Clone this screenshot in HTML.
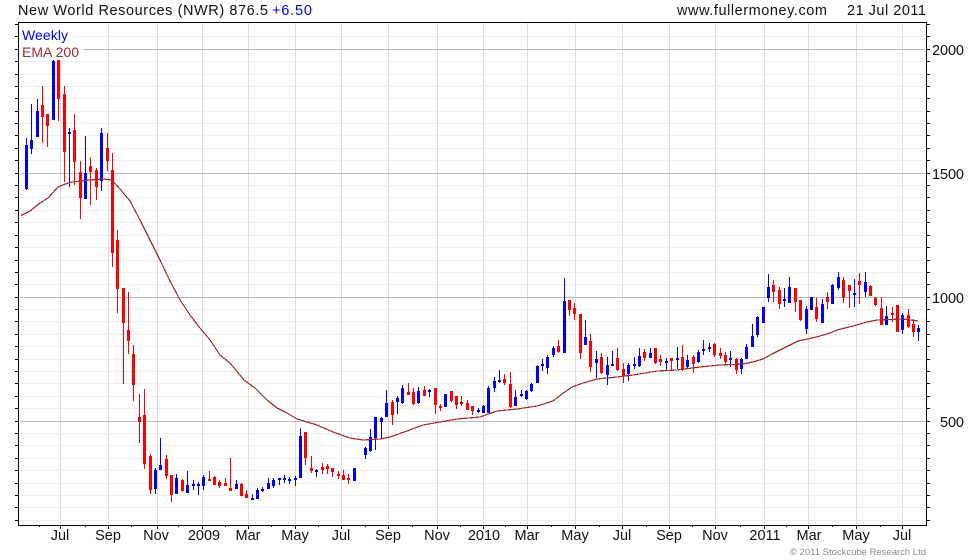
<!DOCTYPE html>
<html><head><meta charset="utf-8"><title>New World Resources (NWR)</title>
<style>
html,body{margin:0;padding:0;background:#fff;width:980px;height:560px;overflow:hidden}
svg{display:block}
text{font-family:"Liberation Sans",Arial,sans-serif;font-size:14.5px;fill:#111}
</style></head><body>
<svg width="980" height="560" viewBox="0 0 980 560" xmlns="http://www.w3.org/2000/svg">
<g shape-rendering="crispEdges" fill="none">
<path stroke="#eee" d="M18 36.5H927M18 61.5H927M18 74.5H927M18 86.5H927M18 98.5H927M18 111.5H927M18 123.5H927M18 135.5H927M18 148.5H927M18 160.5H927M18 185.5H927M18 197.5H927M18 210.5H927M18 222.5H927M18 235.5H927M18 247.5H927M18 260.5H927M18 272.5H927M18 284.5H927M18 309.5H927M18 321.5H927M18 334.5H927M18 346.5H927M18 359.5H927M18 371.5H927M18 383.5H927M18 396.5H927M18 408.5H927M18 433.5H927M18 445.5H927M18 458.5H927M18 470.5H927M18 483.5H927M18 495.5H927M18 507.5H927M18 520.5H927"/>
<path stroke="#ddd" d="M60.5 23V525M108.5 23V525M157.5 23V525M202.5 23V525M248.5 23V525M295.5 23V525M341.5 23V525M388.5 23V525M437.5 23V525M483.5 23V525M527.5 23V525M575.5 23V525M622.5 23V525M669.5 23V525M715.5 23V525M764.5 23V525M808.5 23V525M856.5 23V525M902.5 23V525"/>
<path stroke="#bbb" d="M18 49.5H927M18 173.5H927M18 297.5H927M18 421.5H927"/>
<rect x="19" y="24" width="49" height="19" fill="#fff"/>
<rect x="19" y="43" width="63" height="18" fill="#fff"/>
<path stroke="#00f" d="M26.5 138V190M31.5 104V154M37.5 99V137M53.5 60V120M69.5 128V187M85.5 136V199M101.5 128V191M155.5 468V494M160.5 438V470M176.5 474V494M187.5 471V493M193.5 480V490M198.5 482V495M203.5 475V490M236.5 480V489M252.5 494V500M257.5 488V499M262.5 487V492M268.5 478V489M273.5 478V488M279.5 478V485M284.5 475V483M289.5 477V484M295.5 476V486M300.5 428V478M316.5 469V477M354.5 468V481M365.5 447V459M370.5 429V452M375.5 417V450M381.5 417V439M386.5 390V417M397.5 396V414M402.5 385V404M418.5 387V404M429.5 389V397M445.5 394V407M478.5 408V413M483.5 405V413M488.5 386V413M494.5 377V392M499.5 370V383M515.5 390V406M521.5 390V397M526.5 390V400M531.5 383V392M537.5 365V383M542.5 359V371M547.5 355V374M553.5 346V357M564.5 278V353M585.5 320V345M596.5 351V378M607.5 357V385M612.5 351V366M628.5 363V381M634.5 357V369M639.5 348V367M650.5 348V358M666.5 358V370M677.5 347V369M687.5 355V368M698.5 350V363M703.5 340V355M709.5 343V352M730.5 351V367M741.5 358V374M746.5 344V359M752.5 324V347M757.5 316V337M763.5 307V323M768.5 274V302M784.5 288V307M789.5 277V303M806.5 306V334M811.5 297V310M822.5 299V323M832.5 284V304M838.5 272V290M854.5 279V307M865.5 272V297M886.5 306V325M902.5 313V334M918.5 325V341"/>
<path stroke="#00f" stroke-width="3" d="M26.5 145V189M31.5 140V149M37.5 111V137M53.5 61V120M69.5 132V134M85.5 173V199M101.5 133V181M155.5 470V489M160.5 465V470M176.5 478V494M187.5 485V493M193.5 484V486M198.5 484V486M203.5 477V486M236.5 484V489M252.5 498V500M257.5 490V499M262.5 489V491M268.5 483V489M273.5 480V486M279.5 478V480M284.5 478V480M289.5 479V481M295.5 478V480M300.5 436V478M316.5 470V472M354.5 468V481M365.5 448V455M370.5 437V451M375.5 417V438M381.5 418V422M386.5 403V417M397.5 398V402M402.5 388V403M418.5 391V403M429.5 390V392M445.5 394V407M478.5 410V412M483.5 406V413M488.5 388V413M494.5 381V388M499.5 380V382M515.5 397V406M521.5 394V396M526.5 391V399M531.5 384V391M537.5 366V383M542.5 364V366M547.5 357V368M553.5 348V355M564.5 301V353M585.5 337V345M596.5 359V363M607.5 365V375M612.5 364V366M628.5 365V374M634.5 364V366M639.5 356V366M650.5 353V358M666.5 361V363M677.5 358V360M687.5 360V367M698.5 352V362M703.5 349V351M709.5 347V349M730.5 358V360M741.5 359V369M746.5 347V359M752.5 336V347M757.5 317V335M763.5 307V323M768.5 287V298M784.5 299V301M789.5 287V303M806.5 309V329M811.5 297V310M822.5 304V323M832.5 285V304M838.5 277V288M854.5 293V295M865.5 282V292M886.5 316V325M902.5 315V330M918.5 328V332"/>
<path stroke="#f00" d="M42.5 86V143M47.5 114V147M58.5 60V121M64.5 86V182M74.5 114V185M80.5 161V219M90.5 157V205M96.5 168V200M107.5 133V171M112.5 153V267M117.5 230V313M123.5 288V384M128.5 292V354M133.5 345V401M139.5 394V443M144.5 389V469M150.5 454V494M166.5 455V479M171.5 475V502M182.5 479V492M209.5 471V481M214.5 476V485M219.5 480V488M225.5 478V486M230.5 458V491M241.5 483V496M246.5 490V498M305.5 432V465M311.5 456V473M322.5 463V474M327.5 464V474M332.5 468V477M338.5 471V479M343.5 470V480M348.5 474V484M392.5 400V425M408.5 383V395M413.5 388V405M424.5 386V396M435.5 388V414M440.5 404V411M451.5 391V402M456.5 396V409M461.5 396V406M467.5 400V410M472.5 406V415M504.5 374V385M510.5 372V408M558.5 340V353M569.5 300V316M574.5 303V320M580.5 314V359M590.5 334V372M601.5 353V374M617.5 348V371M623.5 363V383M644.5 349V361M655.5 348V364M660.5 355V366M671.5 358V371M682.5 345V371M693.5 355V373M714.5 343V357M720.5 348V359M725.5 352V364M736.5 358V374M773.5 280V302M779.5 287V309M795.5 288V312M800.5 300V321M816.5 298V322M827.5 292V309M843.5 277V303M849.5 285V308M859.5 273V304M870.5 285V296M875.5 297V306M881.5 297V325M892.5 307V322M897.5 305V332M908.5 309V328M913.5 319V337"/>
<path stroke="#f00" stroke-width="3" d="M42.5 105V117M47.5 114V126M58.5 60V99M64.5 94V152M74.5 130V162M80.5 172V198M90.5 166V172M96.5 170V187M107.5 148V161M112.5 170V253M117.5 240V289M123.5 288V323M128.5 330V341M133.5 354V385M139.5 417V422M144.5 415V464M150.5 456V490M166.5 459V476M171.5 475V495M182.5 480V491M209.5 479V481M214.5 477V485M219.5 482V486M225.5 483V486M230.5 488V491M241.5 484V496M246.5 494V498M305.5 432V458M311.5 468V471M322.5 467V470M327.5 466V469M332.5 468V472M338.5 474V476M343.5 475V480M348.5 478V480M392.5 402V415M408.5 392V395M413.5 392V404M424.5 390V396M435.5 388V405M440.5 406V408M451.5 391V401M456.5 396V405M461.5 402V404M467.5 403V410M472.5 406V411M504.5 379V383M510.5 384V407M558.5 346V352M569.5 300V310M574.5 308V314M580.5 314V353M590.5 341V367M601.5 357V373M617.5 358V370M623.5 369V376M644.5 352V358M655.5 348V363M660.5 359V362M671.5 358V361M682.5 357V370M693.5 357V364M714.5 344V355M720.5 353V356M725.5 355V362M736.5 359V370M773.5 285V292M779.5 290V304M795.5 288V302M800.5 300V320M816.5 307V319M827.5 297V302M843.5 280V298M849.5 285V291M859.5 281V285M870.5 286V296M875.5 298V305M881.5 308V325M892.5 313V315M897.5 305V332M908.5 315V327M913.5 324V332"/>
</g>
<polyline fill="none" stroke="#a52a2a" stroke-width="1.2" shape-rendering="crispEdges" points="21,215.5 30,211 40,203 48,198 58,187 65,184 72,182 90,180 103,179 112,180 120,189 130,201 140,220 150,240 160,260 170,281 180,300 190,315 200,328 210,340 220,355 230,363 244,380 255,388 267,400 277,408 287,413 297,419 307,422 317,425 333,432 350,438 363,440 380,439 390,437 407,431 423,425 440,422 457,419 480,417 497,411 517,409 537,406 553,401 562,394 572,387 583,383 597,379 617,377 633,375 657,371 677,370 700,367 720,365 743,364 753,362 763,359 772,354 788,346 798,341 808,339 820,336 830,333 837,330 853,326 867,322 877,320 903,319 918,321"/>
<g shape-rendering="crispEdges" fill="none" stroke="#000">
<path d="M18.5 22.5H926.5V525.5H18.5Z"/>
<path d="M15 24.5H18M15 36.5H18M15 49.5H18M15 61.5H18M15 74.5H18M15 86.5H18M15 98.5H18M15 111.5H18M15 123.5H18M15 135.5H18M15 148.5H18M15 160.5H18M15 173.5H18M15 185.5H18M15 197.5H18M15 210.5H18M15 222.5H18M15 235.5H18M15 247.5H18M15 260.5H18M15 272.5H18M15 284.5H18M15 297.5H18M15 309.5H18M15 321.5H18M15 334.5H18M15 346.5H18M15 359.5H18M15 371.5H18M15 383.5H18M15 396.5H18M15 408.5H18M15 421.5H18M15 433.5H18M15 445.5H18M15 458.5H18M15 470.5H18M15 483.5H18M15 495.5H18M15 507.5H18M15 520.5H18"/>
<path d="M927 24.5H930M927 36.5H930M927 49.5H930M927 61.5H930M927 74.5H930M927 86.5H930M927 98.5H930M927 111.5H930M927 123.5H930M927 135.5H930M927 148.5H930M927 160.5H930M927 173.5H930M927 185.5H930M927 197.5H930M927 210.5H930M927 222.5H930M927 235.5H930M927 247.5H930M927 260.5H930M927 272.5H930M927 284.5H930M927 297.5H930M927 309.5H930M927 321.5H930M927 334.5H930M927 346.5H930M927 359.5H930M927 371.5H930M927 383.5H930M927 396.5H930M927 408.5H930M927 421.5H930M927 433.5H930M927 445.5H930M927 458.5H930M927 470.5H930M927 483.5H930M927 495.5H930M927 507.5H930M927 520.5H930"/>
<path d="M60.5 526V529M108.5 526V529M157.5 526V529M202.5 526V529M248.5 526V529M295.5 526V529M341.5 526V529M388.5 526V529M437.5 526V529M483.5 526V529M527.5 526V529M575.5 526V529M622.5 526V529M669.5 526V529M715.5 526V529M764.5 526V529M808.5 526V529M856.5 526V529M902.5 526V529"/>
<path d="M39.5 526V527M85.5 526V527M131.5 526V527M178.5 526V527M225.5 526V527M271.5 526V527M318.5 526V527M365.5 526V527M412.5 526V527M460.5 526V527M505.5 526V527M551.5 526V527M599.5 526V527M646.5 526V527M692.5 526V527M740.5 526V527M786.5 526V527M832.5 526V527M880.5 526V527"/>
</g>
<text x="18" y="15" textLength="250">New World Resources (NWR) 876.5</text>
<text x="272" y="15" textLength="40" style="fill:#00f">+6.50</text>
<text x="677" y="15" textLength="150">www.fullermoney.com</text>
<text x="847" y="15" textLength="79">21 Jul 2011</text>
<text x="22" y="40" textLength="46" style="font-size:14px;fill:#00f">Weekly</text>
<text x="22" y="57" textLength="57" style="font-size:14px;fill:#a52a2a">EMA 200</text>
<text x="932" y="55" textLength="32">2000</text>
<text x="932" y="179" textLength="32">1500</text>
<text x="932" y="303" textLength="32">1000</text>
<text x="940" y="427" textLength="24">500</text>
<g text-anchor="middle">
<text x="60" y="540">Jul</text><text x="108" y="540">Sep</text><text x="156" y="540">Nov</text><text x="204" y="540">2009</text><text x="248" y="540">Mar</text><text x="295" y="540">May</text><text x="341" y="540">Jul</text><text x="388" y="540">Sep</text><text x="437" y="540">Nov</text><text x="484" y="540">2010</text><text x="527" y="540">Mar</text><text x="575" y="540">May</text><text x="622" y="540">Jul</text><text x="669" y="540">Sep</text><text x="715" y="540">Nov</text><text x="765" y="540">2011</text><text x="809" y="540">Mar</text><text x="856" y="540">May</text><text x="902" y="540">Jul</text>
</g>
<text x="790" y="555" textLength="136" style="font-size:9.5px;fill:#8a8a8a">© 2011 Stockcube Research Ltd</text>
</svg>
</body></html>
